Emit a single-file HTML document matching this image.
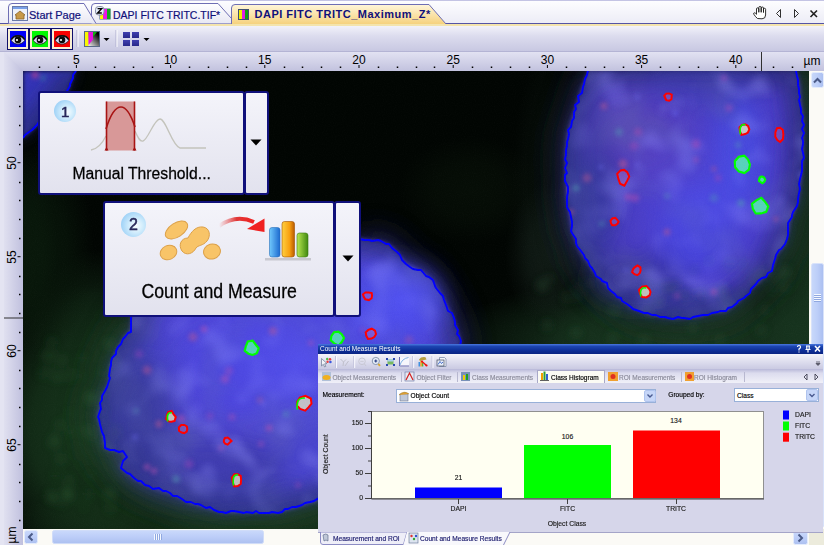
<!DOCTYPE html>
<html><head><meta charset="utf-8">
<style>
*{margin:0;padding:0;box-sizing:border-box}
html,body{width:824px;height:545px;overflow:hidden;background:#e6e6f2;font-family:"Liberation Sans",sans-serif}
div,span,svg{position:absolute}
.t{white-space:nowrap;line-height:1}
#tabstrip{left:0;top:0;width:824px;height:24px;background:linear-gradient(#fdfdff,#ececf6);border-top:1px solid #c4c4e4}
#tabline{left:0;top:23px;width:824px;height:1px;background:#5454a4}
#tabsub{left:0;top:24px;width:824px;height:2px;background:#f4e4ac}
#toolbar{left:0;top:26px;width:824px;height:26px;background:linear-gradient(#f2f2fa,#dcdcee 40%,#c8c8e2);border-bottom:1px solid #b4b4d4}
#rulerT{left:4px;top:52px;width:820px;height:19px;background:linear-gradient(#e2e2f2,#c2c2de);clip-path:polygon(0 0,100% 0,100% 100%,19px 100%)}
#rulerL{left:4px;top:52px;width:19px;height:493px;background:linear-gradient(90deg,#e0e0f0,#c0c0de)}
#frameL{left:0;top:52px;width:4px;height:493px;background:#e4e4f2}
#img{left:23px;top:71px;width:786px;height:458px;background:#020a04;overflow:hidden}
#vscroll{left:809px;top:71px;width:15px;height:474px;background:#fbfaf6}
#hscroll{left:23px;top:529px;width:801px;height:16px;background:#fbfaf6}
.rt{font-size:12px;color:#000;top:53.8px}
.rl{font-size:12px;color:#000;left:7px;transform:rotate(-90deg);transform-origin:0 0}
.co{background:linear-gradient(#f4f4fa,#e2e2ee);border:2px solid #10107a;border-radius:3px}
.cap{font-size:16px;color:#000}
.num{border-radius:50%;background:radial-gradient(circle at 60% 55%,#f8fdff 0,#d0ecfc 35%,#98cef6 80%,#b8c8f4 100%);color:#202050}
#panel{left:318px;top:344px;width:505px;height:189px;background:#d6d6ea;border-bottom:1px solid #a4a4c8}
.ps{font-size:6.5px;color:#000;-webkit-text-stroke:0.15px currentColor}
.cl{font-size:6.8px;color:#202020}
</style></head><body>
<div id="tabstrip"></div>
<div id="tabline"></div>
<div id="tabsub"></div>
<!-- tabs -->
<svg style="left:0;top:0" width="460" height="25" viewBox="0 0 460 25">
  <defs><linearGradient id="tg3" x1="0" y1="0" x2="0" y2="1"><stop offset="0" stop-color="#fff6da"/><stop offset="1" stop-color="#f6d27e"/></linearGradient>
  <linearGradient id="tg1" x1="0" y1="0" x2="0" y2="1"><stop offset="0" stop-color="#ffffff"/><stop offset="1" stop-color="#e8e8f4"/></linearGradient></defs>
  <path d="M91.5,23.5 L91.5,7 Q91.5,3.5 95,3.5 L218,3.5 L236,23.5" fill="url(#tg1)" stroke="#6e6eb4" stroke-width="1"/>
  <path d="M8.5,23.5 L8.5,7 Q8.5,3.5 12,3.5 L84,3.5 L96,23.5" fill="url(#tg1)" stroke="#6e6eb4" stroke-width="1"/>
  <path d="M231.5,24 L231.5,8 Q231.5,4.5 235,4.5 L429,4.5 L446,24" fill="url(#tg3)" stroke="#6e6eb4" stroke-width="1"/>
</svg>
<span class="t" style="left:29px;top:9.5px;font-size:11px;color:#10107a;-webkit-text-stroke:0.2px #10107a">Start Page</span>
<span class="t" style="left:113px;top:9.5px;font-size:10.5px;color:#10107a;-webkit-text-stroke:0.2px #10107a">DAPI FITC TRITC.TIF*</span>
<span class="t" style="left:254.5px;top:9px;font-size:11px;color:#10107a;font-weight:bold;letter-spacing:0.5px">DAPI FITC TRITC_Maximum_Z*</span>
<!-- tab icons -->
<svg style="left:12px;top:6px" width="17" height="16" viewBox="0 0 17 16">
  <rect x="0.5" y="0.5" width="15" height="14" fill="#eef2fa" stroke="#6a7aa8"/>
  <rect x="1" y="1" width="14" height="2" fill="#7aa0e8"/>
  <path d="M3,9 L8,5 L13,9 L12,9 L12,13 L4,13 L4,9 Z" fill="#c89a48" stroke="#8a6428" stroke-width="0.8"/>
</svg>
<svg style="left:94px;top:5px" width="18" height="16" viewBox="0 0 18 16">
  <rect x="5.5" y="3.5" width="11" height="11" fill="#40607a"/>
  <rect x="6" y="4" width="3.2" height="10" fill="#f8f800"/><rect x="9.2" y="4" width="3.8" height="10" fill="#f010e8"/><rect x="13" y="4" width="3.3" height="10" fill="#10a820"/>
  <rect x="1.5" y="1.5" width="8.5" height="8.5" rx="3" fill="#e4ecfa" stroke="#8a90a8" stroke-width="1"/>
  <path d="M3.6,3.6 H7.6 L3.6,8 H7.8" fill="none" stroke="#000" stroke-width="1.4"/>
</svg>
<svg style="left:238px;top:9px" width="11" height="11" viewBox="0 0 11 11">
  <rect x="0" y="0" width="11" height="11" fill="#405070"/><rect x="1" y="1" width="3" height="9" fill="#f0f000"/><rect x="4" y="1" width="3" height="9" fill="#e020e0"/><rect x="7" y="1" width="3" height="9" fill="#10a010"/>
</svg>
<!-- right tab controls -->
<svg style="left:750px;top:4px" width="74" height="18" viewBox="0 0 74 18">
  <path d="M7.5,14.5 Q5.5,13 3.8,10.2 Q3.2,9 4.3,8.8 Q5.2,8.7 6.5,10.3 L6.5,5 Q6.5,3.8 7.7,3.8 Q8.8,3.8 8.8,5 L8.8,8.3 L8.8,3.6 Q8.8,2.5 10,2.5 Q11.2,2.5 11.2,3.6 L11.2,8.3 L11.2,4 Q11.2,3 12.3,3 Q13.5,3 13.5,4 L13.5,8.5 L13.5,5.2 Q13.5,4.3 14.5,4.3 Q15.6,4.3 15.6,5.3 L15.6,11 Q15.6,14.8 12,14.8 Z" fill="#fff" stroke="#1a1a1a" stroke-width="0.9" stroke-linejoin="round"/>
  <path d="M30.5,5.5 L26.5,9.5 L30.5,13.5 Z" fill="none" stroke="#303030" stroke-width="1"/>
  <path d="M44.5,5.5 L48.5,9.5 L44.5,13.5 Z" fill="none" stroke="#303030" stroke-width="1"/>
  <path d="M60.5,6.5 L67,13 M67,6.5 L60.5,13" stroke="#202020" stroke-width="1.6"/>
</svg>
<div id="toolbar"></div>
<!-- toolbar buttons -->
<svg style="left:0;top:26px" width="160" height="26" viewBox="0 26 160 26">
  <defs><linearGradient id="cg" x1="1" y1="0" x2="0" y2="1"><stop offset="0.15" stop-color="#000"/><stop offset="0.9" stop-color="#fff"/></linearGradient>
  <linearGradient id="gq" x1="0" y1="0" x2="0" y2="1"><stop offset="0" stop-color="#4040b0"/><stop offset="1" stop-color="#28288a"/></linearGradient>
  <symbol id="eye" viewBox="0 0 16 16">
    <path d="M1,9 C4,3.2 12,3.2 15,9 C12,14.5 4,14.5 1,9 Z" fill="#d8d8f8" stroke="#202020" stroke-width="0.8"/>
    <path d="M1.3,8.6 C4,3.5 12,3.5 14.7,8.6" fill="none" stroke="#101010" stroke-width="1.7"/>
    <circle cx="8" cy="8.9" r="3.3" fill="#0a0a0a"/><circle cx="7" cy="9" r="1.1" fill="#fff"/>
  </symbol></defs>
  <rect x="7" y="28" width="66" height="22" fill="#10106a"/>
  <rect x="8" y="29" width="20" height="20" fill="#f8f0d4"/><rect x="10" y="31" width="16" height="16" fill="#0000f8"/>
  <rect x="30" y="29" width="20" height="20" fill="#f8f0d4"/><rect x="32" y="31" width="16" height="16" fill="#00f800"/>
  <rect x="52" y="29" width="20" height="20" fill="#f8f0d4"/><rect x="54" y="31" width="16" height="16" fill="#f80000"/>
  <use href="#eye" x="10" y="31" width="16" height="16"/><use href="#eye" x="32" y="31" width="16" height="16"/><use href="#eye" x="54" y="31" width="16" height="16"/>
  <rect x="76.5" y="30" width="1" height="17" fill="#b0b0d0"/><rect x="77.5" y="30" width="1" height="17" fill="#ffffff"/>
  <rect x="84.5" y="31.5" width="15" height="15" fill="url(#cg)" stroke="#5a6a88"/>
  <path d="M85,32 L88.5,32 L88.5,46 L85,46 Z" fill="#f8f800"/><path d="M88.5,32 L93,32 L93,39.5 L88.5,45 Z" fill="#e810e0"/><path d="M93,32 L97,32 L93,37 Z" fill="#10b010"/>
  <path d="M103.5,38 L109.5,38 L106.5,41 Z" fill="#000"/>
  <rect x="115.5" y="30" width="1" height="17" fill="#b0b0d0"/><rect x="116.5" y="30" width="1" height="17" fill="#ffffff"/>
  <g fill="url(#gq)"><rect x="123" y="32" width="7" height="6"/><rect x="132" y="32" width="7" height="6"/><rect x="123" y="40" width="7" height="6"/><rect x="132" y="40" width="7" height="6"/></g>
  <path d="M143.5,38 L149.5,38 L146.5,41 Z" fill="#000"/>
</svg>
<div id="frameL"></div>
<div id="rulerL"></div>
<div id="rulerT"></div>
<!-- ruler ticks -->
<svg style="left:0;top:52px" width="824" height="19" viewBox="0 52 824 19" id="rtick"></svg>
<svg style="left:4px;top:71px" width="19" height="474" viewBox="4 71 19 474" id="ltick"></svg>
<svg style="left:0;top:52px" width="824" height="19" viewBox="0 52 824 19"><rect x="38.75" y="66.5" width="1.5" height="1.5" fill="#000"/><rect x="57.75" y="66.5" width="1.5" height="1.5" fill="#000"/><rect x="75.9" y="65" width="1" height="3" fill="#000"/><rect x="94.75" y="66.5" width="1.5" height="1.5" fill="#000"/><rect x="113.75" y="66.5" width="1.5" height="1.5" fill="#000"/><rect x="132.75" y="66.5" width="1.5" height="1.5" fill="#000"/><rect x="151.75" y="66.5" width="1.5" height="1.5" fill="#000"/><rect x="170.1" y="65" width="1" height="3" fill="#000"/><rect x="188.75" y="66.5" width="1.5" height="1.5" fill="#000"/><rect x="207.75" y="66.5" width="1.5" height="1.5" fill="#000"/><rect x="226.75" y="66.5" width="1.5" height="1.5" fill="#000"/><rect x="245.75" y="66.5" width="1.5" height="1.5" fill="#000"/><rect x="264.3" y="65" width="1" height="3" fill="#000"/><rect x="283.75" y="66.5" width="1.5" height="1.5" fill="#000"/><rect x="301.75" y="66.5" width="1.5" height="1.5" fill="#000"/><rect x="320.75" y="66.5" width="1.5" height="1.5" fill="#000"/><rect x="339.75" y="66.5" width="1.5" height="1.5" fill="#000"/><rect x="358.5" y="65" width="1" height="3" fill="#000"/><rect x="377.75" y="66.5" width="1.5" height="1.5" fill="#000"/><rect x="396.75" y="66.5" width="1.5" height="1.5" fill="#000"/><rect x="415.75" y="66.5" width="1.5" height="1.5" fill="#000"/><rect x="433.75" y="66.5" width="1.5" height="1.5" fill="#000"/><rect x="452.7" y="65" width="1" height="3" fill="#000"/><rect x="471.75" y="66.5" width="1.5" height="1.5" fill="#000"/><rect x="490.75" y="66.5" width="1.5" height="1.5" fill="#000"/><rect x="509.75" y="66.5" width="1.5" height="1.5" fill="#000"/><rect x="528.75" y="66.5" width="1.5" height="1.5" fill="#000"/><rect x="546.9" y="65" width="1" height="3" fill="#000"/><rect x="565.75" y="66.5" width="1.5" height="1.5" fill="#000"/><rect x="584.75" y="66.5" width="1.5" height="1.5" fill="#000"/><rect x="603.75" y="66.5" width="1.5" height="1.5" fill="#000"/><rect x="622.75" y="66.5" width="1.5" height="1.5" fill="#000"/><rect x="641.1" y="65" width="1" height="3" fill="#000"/><rect x="659.75" y="66.5" width="1.5" height="1.5" fill="#000"/><rect x="678.75" y="66.5" width="1.5" height="1.5" fill="#000"/><rect x="697.75" y="66.5" width="1.5" height="1.5" fill="#000"/><rect x="716.75" y="66.5" width="1.5" height="1.5" fill="#000"/><rect x="735.3" y="65" width="1" height="3" fill="#000"/><rect x="754.75" y="66.5" width="1.5" height="1.5" fill="#000"/><rect x="772.75" y="66.5" width="1.5" height="1.5" fill="#000"/><rect x="791.75" y="66.5" width="1.5" height="1.5" fill="#000"/><rect x="761" y="52" width="1" height="19" fill="#303030"/></svg>
<span class="t rt" style="left:46.4px;width:60px;text-align:center">5</span>
<span class="t rt" style="left:140.6px;width:60px;text-align:center">10</span>
<span class="t rt" style="left:234.8px;width:60px;text-align:center">15</span>
<span class="t rt" style="left:329.0px;width:60px;text-align:center">20</span>
<span class="t rt" style="left:423.2px;width:60px;text-align:center">25</span>
<span class="t rt" style="left:517.4px;width:60px;text-align:center">30</span>
<span class="t rt" style="left:611.6px;width:60px;text-align:center">35</span>
<span class="t rt" style="left:705.8px;width:60px;text-align:center">40</span>
<span class="t rt" style="left:803.5px;top:54.5px">µm</span>
<svg style="left:0;top:71px" width="23" height="474" viewBox="0 71 23 474"><rect x="19" y="86.75" width="1.5" height="1.5" fill="#000"/><rect x="19" y="105.75" width="1.5" height="1.5" fill="#000"/><rect x="19" y="124.75" width="1.5" height="1.5" fill="#000"/><rect x="19" y="143.75" width="1.5" height="1.5" fill="#000"/><rect x="17.5" y="162.2" width="3" height="1" fill="#000"/><rect x="19" y="181.75" width="1.5" height="1.5" fill="#000"/><rect x="19" y="199.75" width="1.5" height="1.5" fill="#000"/><rect x="19" y="218.75" width="1.5" height="1.5" fill="#000"/><rect x="19" y="237.75" width="1.5" height="1.5" fill="#000"/><rect x="17.5" y="256.2" width="3" height="1" fill="#000"/><rect x="19" y="275.75" width="1.5" height="1.5" fill="#000"/><rect x="19" y="293.75" width="1.5" height="1.5" fill="#000"/><rect x="19" y="312.75" width="1.5" height="1.5" fill="#000"/><rect x="19" y="331.75" width="1.5" height="1.5" fill="#000"/><rect x="17.5" y="350.2" width="3" height="1" fill="#000"/><rect x="19" y="369.75" width="1.5" height="1.5" fill="#000"/><rect x="19" y="387.75" width="1.5" height="1.5" fill="#000"/><rect x="19" y="406.75" width="1.5" height="1.5" fill="#000"/><rect x="19" y="425.75" width="1.5" height="1.5" fill="#000"/><rect x="17.5" y="444.2" width="3" height="1" fill="#000"/><rect x="19" y="463.75" width="1.5" height="1.5" fill="#000"/><rect x="19" y="481.75" width="1.5" height="1.5" fill="#000"/><rect x="19" y="500.75" width="1.5" height="1.5" fill="#000"/><rect x="19" y="519.75" width="1.5" height="1.5" fill="#000"/><rect x="4" y="317.5" width="19" height="1" fill="#303030"/></svg>
<span class="t rl" style="left:6px;top:192.7px;width:60px;text-align:center">50</span>
<span class="t rl" style="left:6px;top:286.7px;width:60px;text-align:center">55</span>
<span class="t rl" style="left:6px;top:380.7px;width:60px;text-align:center">60</span>
<span class="t rl" style="left:6px;top:474.7px;width:60px;text-align:center">65</span>
<span class="t rl" style="left:6px;top:550px;width:30px;text-align:center">µm</span>
<div id="img"><svg width="786" height="458" viewBox="23 71 786 458" style="display:block">
<defs>
<filter id="b40" x="-50%" y="-50%" width="200%" height="200%"><feGaussianBlur stdDeviation="40"/></filter>
<filter id="b25" x="-50%" y="-50%" width="200%" height="200%"><feGaussianBlur stdDeviation="25"/></filter>
<filter id="b12" x="-50%" y="-50%" width="200%" height="200%"><feGaussianBlur stdDeviation="12"/></filter>
<filter id="b10" x="-50%" y="-50%" width="200%" height="200%"><feGaussianBlur stdDeviation="10"/></filter>
<filter id="b6" x="-50%" y="-50%" width="200%" height="200%"><feGaussianBlur stdDeviation="6"/></filter>
<filter id="b4" x="-50%" y="-50%" width="200%" height="200%"><feGaussianBlur stdDeviation="4"/></filter>
<filter id="b2" x="-50%" y="-50%" width="200%" height="200%"><feGaussianBlur stdDeviation="2"/></filter>
<filter id="turb" x="23" y="71" width="786" height="458" filterUnits="userSpaceOnUse">
<feTurbulence type="fractalNoise" baseFrequency="0.035" numOctaves="2" seed="5" result="n"/>
<feColorMatrix type="matrix" values="0.9 0 0 0 -0.35  0 0.6 0 0 -0.25  0 0 1.1 0 -0.45  0 0 0 0 0.45"/>
</filter>
<filter id="turb3" x="23" y="71" width="786" height="458" filterUnits="userSpaceOnUse">
<feTurbulence type="fractalNoise" baseFrequency="0.03" numOctaves="2" seed="21" result="n"/>
<feColorMatrix type="matrix" values="0 0 0 0 0.30  0 0 0 0 0.30  0 0 0 0 0.98  3 0 0 0 -1.5"/><feGaussianBlur stdDeviation="2.5"/>
</filter>
<filter id="turb2" x="23" y="71" width="786" height="458" filterUnits="userSpaceOnUse">
<feTurbulence type="fractalNoise" baseFrequency="0.02" numOctaves="2" seed="9" result="n"/>
<feColorMatrix type="matrix" values="0 0 0 0 0.12  0 0 0 0 0.14  0 0 0 0 0.4  -3 0 0 0 1.6"/><feGaussianBlur stdDeviation="2.5"/>
</filter>
<clipPath id="cR"><polygon id="pR" points="589.0,71.0 582.0,88.0 574.0,113.0 567.6,134.0 565.5,155.0 566.7,197.0 571.8,230.0 580.0,251.0 597.0,276.0 620.0,298.8 633.8,309.0 652.0,315.0 672.8,318.3 698.0,317.0 711.7,312.6 725.5,311.4 739.3,301.0 755.3,285.0 771.4,270.0 776.0,255.2 785.0,243.8 788.6,230.0 789.3,222.2 797.5,202.5 800.8,179.4 803.0,153.0 803.0,120.3 800.8,104.0 799.2,84.0 796.0,71.0"/></clipPath>
<filter id="dither" x="23" y="71" width="786" height="458" filterUnits="userSpaceOnUse">
<feTurbulence type="fractalNoise" baseFrequency="0.9" numOctaves="1" seed="3"/>
<feColorMatrix type="matrix" values="0 0 0 0 1  0 0 0 0 1  0 0 0 0 1  0.05 0 0 0 -0.025"/>
</filter>
<filter id="dither2" x="23" y="71" width="786" height="458" filterUnits="userSpaceOnUse">
<feTurbulence type="fractalNoise" baseFrequency="0.9" numOctaves="1" seed="3"/>
<feColorMatrix type="matrix" values="0 0 0 0 0  0 0 0 0 0  0 0 0 0 0  -0.05 0 0 0 0.025"/>
</filter>
<radialGradient id="dk"><stop offset="0" stop-color="#303a90" stop-opacity="0.5"/><stop offset="0.6" stop-color="#303a90" stop-opacity="0.3"/><stop offset="1" stop-color="#303a90" stop-opacity="0"/></radialGradient>
<radialGradient id="br"><stop offset="0" stop-color="#5858f8" stop-opacity="0.6"/><stop offset="0.6" stop-color="#5050f0" stop-opacity="0.3"/><stop offset="1" stop-color="#5050f0" stop-opacity="0"/></radialGradient>
<clipPath id="cTL"><polygon points="74.5,71.0 68.0,90.0 55.0,105.0 38.5,124.0 23.0,138.0 23.0,71.0"/></clipPath>
<clipPath id="cC"><polygon points="132.5,316.0 131.0,330.5 125.0,336.5 115.0,354.0 110.5,366.0 109.0,383.5 103.0,395.0 98.0,416.0 103.0,436.5 104.7,447.0 110.0,449.3 122.0,452.0 126.0,457.4 120.7,466.7 126.0,472.0 136.7,480.0 158.0,489.4 174.0,494.7 190.0,502.7 222.0,512.0 277.0,512.0 297.0,506.8 318.0,500.0 360.0,470.0 420.0,420.0 455.0,370.0 460.0,341.0 453.0,318.0 442.0,297.0 431.6,280.7 421.0,271.4 405.0,263.4 397.0,252.7 389.0,244.7 381.0,242.0 361.0,239.3 300.0,232.0 200.0,250.0 150.0,290.0"/></clipPath>
</defs>
<rect x="23" y="71" width="786" height="458" fill="#020603"/>
<defs><radialGradient id="gh0"><stop offset="0" stop-color="#1c4022" stop-opacity="0.85"/><stop offset="0.5" stop-color="#1c4022" stop-opacity="0.6375"/><stop offset="1" stop-color="#1c4022" stop-opacity="0"/></radialGradient><radialGradient id="gh1"><stop offset="0" stop-color="#15301a" stop-opacity="0.7"/><stop offset="0.5" stop-color="#15301a" stop-opacity="0.5249999999999999"/><stop offset="1" stop-color="#15301a" stop-opacity="0"/></radialGradient><radialGradient id="gh2"><stop offset="0" stop-color="#0c1e0e" stop-opacity="0.6"/><stop offset="0.5" stop-color="#0c1e0e" stop-opacity="0.44999999999999996"/><stop offset="1" stop-color="#0c1e0e" stop-opacity="0"/></radialGradient><radialGradient id="gh3"><stop offset="0" stop-color="#1a3a1e" stop-opacity="0.8"/><stop offset="0.5" stop-color="#1a3a1e" stop-opacity="0.6000000000000001"/><stop offset="1" stop-color="#1a3a1e" stop-opacity="0"/></radialGradient><radialGradient id="gh4"><stop offset="0" stop-color="#0a1a0c" stop-opacity="0.8"/><stop offset="0.5" stop-color="#0a1a0c" stop-opacity="0.6000000000000001"/><stop offset="1" stop-color="#0a1a0c" stop-opacity="0"/></radialGradient><radialGradient id="gh5"><stop offset="0" stop-color="#102616" stop-opacity="0.5"/><stop offset="0.5" stop-color="#102616" stop-opacity="0.375"/><stop offset="1" stop-color="#102616" stop-opacity="0"/></radialGradient><radialGradient id="gh6"><stop offset="0" stop-color="#1c3c24" stop-opacity="0.9"/><stop offset="0.5" stop-color="#1c3c24" stop-opacity="0.675"/><stop offset="1" stop-color="#1c3c24" stop-opacity="0"/></radialGradient><radialGradient id="gh7"><stop offset="0" stop-color="#183620" stop-opacity="0.9"/><stop offset="0.5" stop-color="#183620" stop-opacity="0.675"/><stop offset="1" stop-color="#183620" stop-opacity="0"/></radialGradient><radialGradient id="gh8"><stop offset="0" stop-color="#0a140a" stop-opacity="0.6"/><stop offset="0.5" stop-color="#0a140a" stop-opacity="0.44999999999999996"/><stop offset="1" stop-color="#0a140a" stop-opacity="0"/></radialGradient><radialGradient id="gh9"><stop offset="0" stop-color="#0e1812" stop-opacity="0.5"/><stop offset="0.5" stop-color="#0e1812" stop-opacity="0.375"/><stop offset="1" stop-color="#0e1812" stop-opacity="0"/></radialGradient><radialGradient id="gh10"><stop offset="0" stop-color="#16221c" stop-opacity="0.7"/><stop offset="0.5" stop-color="#16221c" stop-opacity="0.5249999999999999"/><stop offset="1" stop-color="#16221c" stop-opacity="0"/></radialGradient><radialGradient id="gh11"><stop offset="0" stop-color="#1a3820" stop-opacity="0.8"/><stop offset="0.5" stop-color="#1a3820" stop-opacity="0.6000000000000001"/><stop offset="1" stop-color="#1a3820" stop-opacity="0"/></radialGradient><radialGradient id="gh12"><stop offset="0" stop-color="#183220" stop-opacity="0.8"/><stop offset="0.5" stop-color="#183220" stop-opacity="0.6000000000000001"/><stop offset="1" stop-color="#183220" stop-opacity="0"/></radialGradient></defs><ellipse cx="80" cy="430" rx="99" ry="144" fill="url(#gh0)"/><ellipse cx="95" cy="340" rx="63" ry="90" fill="url(#gh1)"/><ellipse cx="30" cy="260" rx="27" ry="108" fill="url(#gh2)"/><ellipse cx="220" cy="525" rx="216" ry="45" fill="url(#gh3)"/><ellipse cx="40" cy="250" rx="54" ry="108" fill="url(#gh4)"/><ellipse cx="600" cy="335" rx="63" ry="45" fill="url(#gh5)"/><ellipse cx="690" cy="345" rx="252" ry="72" fill="url(#gh6)"/><ellipse cx="810" cy="290" rx="54" ry="198" fill="url(#gh7)"/><ellipse cx="470" cy="190" rx="72" ry="54" fill="url(#gh8)"/><ellipse cx="548" cy="190" rx="36" ry="144" fill="url(#gh9)"/><ellipse cx="550" cy="255" rx="45" ry="72" fill="url(#gh10)"/><ellipse cx="440" cy="510" rx="198" ry="72" fill="url(#gh11)"/><ellipse cx="810" cy="90" rx="27" ry="72" fill="url(#gh12)"/>
<g filter="url(#b12)" opacity="0.8">
<polyline points="132.5,316.0 131.0,330.5 125.0,336.5 115.0,354.0 110.5,366.0 109.0,383.5 103.0,395.0 98.0,416.0 103.0,436.5 104.7,447.0 110.0,449.3 122.0,452.0 126.0,457.4 120.7,466.7 126.0,472.0 136.7,480.0 158.0,489.4 174.0,494.7 190.0,502.7 222.0,512.0 277.0,512.0 297.0,506.8 318.0,500.0 360.0,470.0" fill="none" stroke="#22422c" stroke-width="34"/>
<polyline points="360.0,470.0 420.0,420.0 455.0,370.0 460.0,341.0 453.0,318.0 442.0,297.0 431.6,280.7 421.0,271.4 405.0,263.4 397.0,252.7 389.0,244.7 381.0,242.0 361.0,239.3" fill="none" stroke="#1a1c4a" stroke-width="24"/>
<polyline points="580.0,251.0 597.0,276.0 620.0,298.8 633.8,309.0 652.0,315.0 672.8,318.3 698.0,317.0 711.7,312.6 725.5,311.4 739.3,301.0 755.3,285.0 771.4,270.0 776.0,255.2 785.0,243.8 788.6,230.0 789.3,222.2 797.5,202.5 800.8,179.4 803.0,153.0 803.0,120.3 800.8,104.0 799.2,84.0 796.0,71.0" fill="none" stroke="#1c3628" stroke-width="30"/>
<polyline points="589.0,71.0 582.0,88.0 574.0,113.0 567.6,134.0 565.5,155.0 566.7,197.0 571.8,230.0 580.0,251.0 597.0,276.0" fill="none" stroke="#1c2040" stroke-width="24"/>
</g>
<g filter="url(#b6)" opacity="0.28">
<polygon points="74.5,71.0 68.0,90.0 55.0,105.0 38.5,124.0 23.0,138.0 23.0,71.0" fill="#30309a" stroke="#30309a" stroke-width="6"/>
<polygon points="132.5,316.0 131.0,330.5 125.0,336.5 115.0,354.0 110.5,366.0 109.0,383.5 103.0,395.0 98.0,416.0 103.0,436.5 104.7,447.0 110.0,449.3 122.0,452.0 126.0,457.4 120.7,466.7 126.0,472.0 136.7,480.0 158.0,489.4 174.0,494.7 190.0,502.7 222.0,512.0 277.0,512.0 297.0,506.8 318.0,500.0 360.0,470.0 420.0,420.0 455.0,370.0 460.0,341.0 453.0,318.0 442.0,297.0 431.6,280.7 421.0,271.4 405.0,263.4 397.0,252.7 389.0,244.7 381.0,242.0 361.0,239.3 300.0,232.0 200.0,250.0 150.0,290.0" fill="#4040b0" stroke="#4040b0" stroke-width="6"/>
<polygon points="589.0,71.0 582.0,88.0 574.0,113.0 567.6,134.0 565.5,155.0 566.7,197.0 571.8,230.0 580.0,251.0 597.0,276.0 620.0,298.8 633.8,309.0 652.0,315.0 672.8,318.3 698.0,317.0 711.7,312.6 725.5,311.4 739.3,301.0 755.3,285.0 771.4,270.0 776.0,255.2 785.0,243.8 788.6,230.0 789.3,222.2 797.5,202.5 800.8,179.4 803.0,153.0 803.0,120.3 800.8,104.0 799.2,84.0 796.0,71.0" fill="#3a3aa8" stroke="#3a3aa8" stroke-width="6"/>
</g>
<g filter="url(#b2)">
<polygon points="74.5,71.0 68.0,90.0 55.0,105.0 38.5,124.0 23.0,138.0 23.0,71.0" fill="#3636b8"/>
<polygon points="132.5,316.0 131.0,330.5 125.0,336.5 115.0,354.0 110.5,366.0 109.0,383.5 103.0,395.0 98.0,416.0 103.0,436.5 104.7,447.0 110.0,449.3 122.0,452.0 126.0,457.4 120.7,466.7 126.0,472.0 136.7,480.0 158.0,489.4 174.0,494.7 190.0,502.7 222.0,512.0 277.0,512.0 297.0,506.8 318.0,500.0 360.0,470.0 420.0,420.0 455.0,370.0 460.0,341.0 453.0,318.0 442.0,297.0 431.6,280.7 421.0,271.4 405.0,263.4 397.0,252.7 389.0,244.7 381.0,242.0 361.0,239.3 300.0,232.0 200.0,250.0 150.0,290.0" fill="#5046d4"/>
<polygon points="589.0,71.0 582.0,88.0 574.0,113.0 567.6,134.0 565.5,155.0 566.7,197.0 571.8,230.0 580.0,251.0 597.0,276.0 620.0,298.8 633.8,309.0 652.0,315.0 672.8,318.3 698.0,317.0 711.7,312.6 725.5,311.4 739.3,301.0 755.3,285.0 771.4,270.0 776.0,255.2 785.0,243.8 788.6,230.0 789.3,222.2 797.5,202.5 800.8,179.4 803.0,153.0 803.0,120.3 800.8,104.0 799.2,84.0 796.0,71.0" fill="#4c3ec4"/>
</g>
<g clip-path="url(#cC)"><g filter="url(#b10)" opacity="0.7"><polygon points="132.5,316.0 131.0,330.5 125.0,336.5 115.0,354.0 110.5,366.0 109.0,383.5 103.0,395.0 98.0,416.0 103.0,436.5 104.7,447.0 110.0,449.3 122.0,452.0 126.0,457.4 120.7,466.7 126.0,472.0 136.7,480.0 158.0,489.4 174.0,494.7 190.0,502.7 222.0,512.0 277.0,512.0 297.0,506.8 318.0,500.0 360.0,470.0 420.0,420.0 455.0,370.0 460.0,341.0 453.0,318.0 442.0,297.0 431.6,280.7 421.0,271.4 405.0,263.4 397.0,252.7 389.0,244.7 381.0,242.0 361.0,239.3 300.0,232.0 200.0,250.0 150.0,290.0" fill="none" stroke="#262a6a" stroke-width="30"/></g></g>
<g clip-path="url(#cTL)"><g filter="url(#b10)" opacity="0.6"><polyline points="74.5,71.0 68.0,90.0 55.0,105.0 38.5,124.0 23.0,138.0" fill="none" stroke="#20285a" stroke-width="30"/></g></g>
<g filter="url(#b2)"><circle cx="35" cy="75" r="3.5" fill="#b04090" opacity="0.7"/><circle cx="43" cy="78" r="3" fill="#3a80a0" opacity="0.5"/></g>
<g clip-path="url(#cR)"><g filter="url(#b10)" opacity="0.7"><polygon points="589.0,71.0 582.0,88.0 574.0,113.0 567.6,134.0 565.5,155.0 566.7,197.0 571.8,230.0 580.0,251.0 597.0,276.0 620.0,298.8 633.8,309.0 652.0,315.0 672.8,318.3 698.0,317.0 711.7,312.6 725.5,311.4 739.3,301.0 755.3,285.0 771.4,270.0 776.0,255.2 785.0,243.8 788.6,230.0 789.3,222.2 797.5,202.5 800.8,179.4 803.0,153.0 803.0,120.3 800.8,104.0 799.2,84.0 796.0,71.0" fill="none" stroke="#262a6a" stroke-width="30"/></g></g>
<g filter="url(#b12)"><ellipse cx="395" cy="300" rx="45" ry="35" fill="#4a4ae8" opacity="0.9"/><ellipse cx="240" cy="370" rx="60" ry="40" fill="#4c42d8" opacity="0.7"/><ellipse cx="210" cy="470" rx="80" ry="35" fill="#363698" opacity="0.6"/><ellipse cx="140" cy="420" rx="30" ry="60" fill="#3a3a90" opacity="0.6"/><ellipse cx="330" cy="450" rx="50" ry="40" fill="#4646c8" opacity="0.5"/><ellipse cx="700" cy="230" rx="40" ry="45" fill="#4646e0" opacity="0.7"/><ellipse cx="740" cy="150" rx="25" ry="60" fill="#4650e8" opacity="0.7"/><ellipse cx="640" cy="140" rx="60" ry="50" fill="#5a40b8" opacity="0.6"/><ellipse cx="640" cy="280" rx="50" ry="25" fill="#30308a" opacity="0.7"/><ellipse cx="600" cy="200" rx="25" ry="50" fill="#38389c" opacity="0.6"/><ellipse cx="700" cy="90" rx="60" ry="25" fill="#4040b8" opacity="0.5"/></g>
<g clip-path="url(#cC)"><rect x="23" y="71" width="786" height="458" filter="url(#turb2)" opacity="0.35"/></g>
<g clip-path="url(#cR)"><rect x="23" y="71" width="786" height="458" filter="url(#turb2)" opacity="0.35"/></g>
<g clip-path="url(#cC)"><rect x="23" y="71" width="786" height="458" filter="url(#turb3)" opacity="0.45"/></g>
<g clip-path="url(#cR)"><rect x="23" y="71" width="786" height="458" filter="url(#turb3)" opacity="0.4"/></g>
<g clip-path="url(#cC)"><ellipse cx="110" cy="410" rx="90" ry="130" fill="url(#dk)"/><ellipse cx="250" cy="520" rx="150" ry="50" fill="url(#dk)"/></g>
<g clip-path="url(#cR)"><ellipse cx="575" cy="190" rx="50" ry="140" fill="url(#dk)"/><ellipse cx="680" cy="320" rx="120" ry="40" fill="url(#dk)"/></g>
<g clip-path="url(#cC)"><ellipse cx="300" cy="360" rx="150" ry="80" fill="url(#br)"/><ellipse cx="400" cy="300" rx="60" ry="50" fill="url(#br)"/></g>
<g clip-path="url(#cR)"><ellipse cx="700" cy="200" rx="90" ry="100" fill="url(#br)" opacity="0.6"/></g>
<g clip-path="url(#cC)"><g filter="url(#b2)"><circle cx="159" cy="424" r="3.4" fill="#c05890" opacity="0.51"/><circle cx="336" cy="492" r="3.8" fill="#c05890" opacity="0.50"/><circle cx="358" cy="434" r="3.6" fill="#c050b0" opacity="0.52"/><circle cx="193" cy="337" r="4.4" fill="#c05890" opacity="0.46"/><circle cx="229" cy="371" r="4.2" fill="#c050b0" opacity="0.32"/><circle cx="435" cy="423" r="2.6" fill="#6a6af0" opacity="0.42"/><circle cx="135" cy="437" r="3.0" fill="#6a6af0" opacity="0.37"/><circle cx="330" cy="401" r="3.3" fill="#50a0b0" opacity="0.44"/><circle cx="325" cy="387" r="3.1" fill="#50a0b0" opacity="0.36"/><circle cx="269" cy="428" r="3.3" fill="#c050b0" opacity="0.51"/><circle cx="154" cy="471" r="2.9" fill="#c050b0" opacity="0.53"/><circle cx="379" cy="422" r="3.3" fill="#c05890" opacity="0.44"/><circle cx="324" cy="486" r="2.7" fill="#50a0b0" opacity="0.38"/><circle cx="424" cy="378" r="2.8" fill="#c050b0" opacity="0.48"/><circle cx="396" cy="405" r="2.9" fill="#c05890" opacity="0.44"/><circle cx="210" cy="416" r="3.3" fill="#a048b8" opacity="0.40"/><circle cx="147" cy="467" r="3.0" fill="#c050b0" opacity="0.54"/><circle cx="311" cy="343" r="2.9" fill="#c050b0" opacity="0.40"/><circle cx="363" cy="330" r="2.6" fill="#c050b0" opacity="0.34"/><circle cx="264" cy="404" r="3.2" fill="#6a6af0" opacity="0.37"/><circle cx="326" cy="415" r="3.8" fill="#6a6af0" opacity="0.30"/><circle cx="189" cy="464" r="4.4" fill="#a048b8" opacity="0.42"/><circle cx="139" cy="354" r="3.8" fill="#a048b8" opacity="0.38"/><circle cx="298" cy="485" r="2.8" fill="#a048b8" opacity="0.46"/><circle cx="147" cy="370" r="4.3" fill="#c05890" opacity="0.45"/><circle cx="232" cy="417" r="3.5" fill="#c050b0" opacity="0.36"/><circle cx="273" cy="331" r="4.1" fill="#c05890" opacity="0.45"/><circle cx="261" cy="444" r="2.8" fill="#c050b0" opacity="0.42"/><circle cx="204" cy="329" r="3.1" fill="#c050b0" opacity="0.53"/><circle cx="286" cy="414" r="3.3" fill="#50a0b0" opacity="0.36"/><circle cx="366" cy="417" r="3.6" fill="#6a6af0" opacity="0.33"/><circle cx="176" cy="479" r="3.8" fill="#50a0b0" opacity="0.47"/><circle cx="225" cy="379" r="4.3" fill="#c050b0" opacity="0.42"/><circle cx="221" cy="448" r="2.5" fill="#c050b0" opacity="0.46"/><circle cx="136" cy="411" r="2.8" fill="#50a0b0" opacity="0.32"/><circle cx="181" cy="419" r="4.3" fill="#c050b0" opacity="0.48"/><circle cx="236" cy="306" r="3.2" fill="#50a0b0" opacity="0.47"/><circle cx="409" cy="340" r="4.4" fill="#c05890" opacity="0.31"/><circle cx="260" cy="400" r="3.3" fill="#c05890" opacity="0.30"/><circle cx="326" cy="415" r="4.5" fill="#c050b0" opacity="0.52"/></g></g>
<g clip-path="url(#cR)"><g filter="url(#b2)"><circle cx="675" cy="113" r="3.4" fill="#6a6af0" opacity="0.42"/><circle cx="601" cy="167" r="2.6" fill="#6a6af0" opacity="0.45"/><circle cx="628" cy="197" r="3.5" fill="#c050b0" opacity="0.45"/><circle cx="738" cy="160" r="3.2" fill="#c050b0" opacity="0.34"/><circle cx="619" cy="132" r="3.8" fill="#50a0b0" opacity="0.41"/><circle cx="738" cy="145" r="2.9" fill="#50a0b0" opacity="0.41"/><circle cx="724" cy="78" r="3.3" fill="#a048b8" opacity="0.45"/><circle cx="667" cy="232" r="3.2" fill="#c05890" opacity="0.52"/><circle cx="714" cy="198" r="4.1" fill="#50a0b0" opacity="0.33"/><circle cx="571" cy="212" r="3.3" fill="#c05890" opacity="0.43"/><circle cx="637" cy="97" r="3.4" fill="#6a6af0" opacity="0.32"/><circle cx="795" cy="213" r="3.9" fill="#c050b0" opacity="0.37"/><circle cx="626" cy="270" r="2.5" fill="#6a6af0" opacity="0.33"/><circle cx="667" cy="196" r="3.0" fill="#50a0b0" opacity="0.34"/><circle cx="776" cy="219" r="2.7" fill="#c05890" opacity="0.43"/><circle cx="638" cy="132" r="3.9" fill="#c050b0" opacity="0.35"/><circle cx="635" cy="198" r="4.0" fill="#c050b0" opacity="0.43"/><circle cx="741" cy="203" r="3.6" fill="#50a0b0" opacity="0.54"/><circle cx="565" cy="190" r="3.3" fill="#a048b8" opacity="0.50"/><circle cx="714" cy="169" r="2.8" fill="#c05890" opacity="0.41"/><circle cx="604" cy="106" r="3.6" fill="#c05890" opacity="0.46"/><circle cx="576" cy="188" r="3.4" fill="#50a0b0" opacity="0.46"/><circle cx="714" cy="292" r="2.9" fill="#c050b0" opacity="0.52"/><circle cx="803" cy="175" r="4.5" fill="#6a6af0" opacity="0.53"/><circle cx="677" cy="296" r="3.2" fill="#c050b0" opacity="0.32"/><circle cx="602" cy="224" r="3.5" fill="#50a0b0" opacity="0.31"/><circle cx="696" cy="160" r="2.8" fill="#c050b0" opacity="0.38"/><circle cx="696" cy="144" r="4.5" fill="#a048b8" opacity="0.53"/><circle cx="587" cy="178" r="4.4" fill="#c05890" opacity="0.42"/><circle cx="718" cy="178" r="3.4" fill="#a048b8" opacity="0.44"/><circle cx="729" cy="108" r="3.5" fill="#a048b8" opacity="0.51"/><circle cx="623" cy="164" r="4.4" fill="#c05890" opacity="0.52"/><circle cx="634" cy="146" r="4.4" fill="#a048b8" opacity="0.43"/><circle cx="637" cy="165" r="2.7" fill="#6a6af0" opacity="0.30"/></g></g>
<g filter="url(#b4)"><circle cx="70" cy="432" r="2.1" fill="#3a7040" opacity="0.48"/><circle cx="84" cy="508" r="2.4" fill="#3a7040" opacity="0.23"/><circle cx="53" cy="498" r="3.4" fill="#3a7040" opacity="0.48"/><circle cx="104" cy="409" r="2.7" fill="#3a7040" opacity="0.35"/><circle cx="67" cy="493" r="4.8" fill="#3a7040" opacity="0.48"/><circle cx="82" cy="358" r="3.3" fill="#3a7040" opacity="0.21"/><circle cx="61" cy="459" r="4.9" fill="#3a7040" opacity="0.21"/><circle cx="52" cy="342" r="2.9" fill="#3a7040" opacity="0.42"/><circle cx="60" cy="425" r="3.5" fill="#3a7040" opacity="0.37"/><circle cx="108" cy="446" r="4.2" fill="#3a7040" opacity="0.41"/><circle cx="110" cy="344" r="3.9" fill="#3a7040" opacity="0.45"/><circle cx="89" cy="431" r="4.6" fill="#3a7040" opacity="0.36"/><circle cx="57" cy="377" r="3.6" fill="#3a7040" opacity="0.38"/><circle cx="51" cy="496" r="3.9" fill="#3a7040" opacity="0.30"/><circle cx="54" cy="443" r="4.7" fill="#3a7040" opacity="0.26"/><circle cx="102" cy="373" r="2.3" fill="#3a7040" opacity="0.47"/><circle cx="51" cy="355" r="3.2" fill="#3a7040" opacity="0.33"/><circle cx="115" cy="432" r="4.1" fill="#3a7040" opacity="0.26"/><circle cx="90" cy="476" r="2.3" fill="#3a7040" opacity="0.37"/><circle cx="69" cy="480" r="3.1" fill="#3a7040" opacity="0.41"/><circle cx="91" cy="398" r="5.0" fill="#3a7040" opacity="0.45"/><circle cx="104" cy="422" r="2.1" fill="#3a7040" opacity="0.43"/><circle cx="89" cy="494" r="3.4" fill="#3a7040" opacity="0.26"/><circle cx="49" cy="369" r="2.5" fill="#3a7040" opacity="0.28"/><circle cx="94" cy="439" r="2.4" fill="#3a7040" opacity="0.40"/><circle cx="46" cy="356" r="3.2" fill="#3a7040" opacity="0.33"/><circle cx="68" cy="376" r="3.1" fill="#3a7040" opacity="0.39"/><circle cx="43" cy="374" r="3.2" fill="#3a7040" opacity="0.31"/><circle cx="70" cy="497" r="3.8" fill="#3a7040" opacity="0.23"/><circle cx="103" cy="395" r="2.3" fill="#3a7040" opacity="0.45"/><circle cx="110" cy="494" r="4.8" fill="#3a7040" opacity="0.37"/><circle cx="55" cy="439" r="3.0" fill="#3a7040" opacity="0.43"/><circle cx="62" cy="360" r="4.2" fill="#3a7040" opacity="0.25"/><circle cx="115" cy="363" r="3.0" fill="#3a7040" opacity="0.36"/><circle cx="70" cy="413" r="2.5" fill="#3a7040" opacity="0.26"/><circle cx="55" cy="476" r="2.9" fill="#3a7040" opacity="0.23"/><circle cx="111" cy="508" r="4.7" fill="#3a7040" opacity="0.21"/><circle cx="62" cy="503" r="2.9" fill="#3a7040" opacity="0.26"/><circle cx="72" cy="371" r="2.2" fill="#3a7040" opacity="0.35"/><circle cx="80" cy="376" r="2.4" fill="#3a7040" opacity="0.32"/><circle cx="695" cy="270" r="2.3" fill="#3a6a44" opacity="0.26"/><circle cx="659" cy="302" r="4.3" fill="#3a6a44" opacity="0.36"/><circle cx="543" cy="282" r="2.8" fill="#3a6a44" opacity="0.29"/><circle cx="685" cy="295" r="3.6" fill="#3a6a44" opacity="0.41"/><circle cx="567" cy="297" r="3.9" fill="#3a6a44" opacity="0.34"/><circle cx="720" cy="340" r="3.2" fill="#3a6a44" opacity="0.43"/><circle cx="644" cy="341" r="4.6" fill="#3a6a44" opacity="0.34"/><circle cx="700" cy="296" r="3.5" fill="#3a6a44" opacity="0.27"/><circle cx="647" cy="286" r="3.6" fill="#3a6a44" opacity="0.32"/><circle cx="613" cy="338" r="4.0" fill="#3a6a44" opacity="0.39"/><circle cx="547" cy="325" r="3.8" fill="#3a6a44" opacity="0.36"/><circle cx="650" cy="317" r="2.2" fill="#3a6a44" opacity="0.28"/><circle cx="647" cy="309" r="4.2" fill="#3a6a44" opacity="0.28"/><circle cx="755" cy="279" r="4.2" fill="#3a6a44" opacity="0.26"/><circle cx="743" cy="264" r="2.3" fill="#3a6a44" opacity="0.40"/><circle cx="785" cy="272" r="4.9" fill="#3a6a44" opacity="0.26"/><circle cx="730" cy="264" r="3.3" fill="#3a6a44" opacity="0.23"/><circle cx="772" cy="290" r="2.5" fill="#3a6a44" opacity="0.29"/><circle cx="578" cy="295" r="3.8" fill="#3a6a44" opacity="0.36"/><circle cx="723" cy="291" r="4.2" fill="#3a6a44" opacity="0.40"/><circle cx="577" cy="284" r="2.4" fill="#3a6a44" opacity="0.32"/><circle cx="675" cy="286" r="3.5" fill="#3a6a44" opacity="0.41"/><circle cx="614" cy="311" r="4.2" fill="#3a6a44" opacity="0.37"/><circle cx="591" cy="283" r="2.7" fill="#3a6a44" opacity="0.44"/><circle cx="675" cy="315" r="2.6" fill="#3a6a44" opacity="0.37"/><circle cx="709" cy="261" r="2.8" fill="#3a6a44" opacity="0.21"/><circle cx="550" cy="279" r="2.8" fill="#3a6a44" opacity="0.39"/><circle cx="786" cy="274" r="2.7" fill="#3a6a44" opacity="0.45"/><circle cx="670" cy="290" r="3.0" fill="#3a6a44" opacity="0.32"/><circle cx="576" cy="333" r="4.4" fill="#3a6a44" opacity="0.31"/><circle cx="761" cy="330" r="4.3" fill="#3a6a44" opacity="0.31"/><circle cx="741" cy="293" r="2.5" fill="#3a6a44" opacity="0.24"/><circle cx="765" cy="310" r="2.9" fill="#3a6a44" opacity="0.39"/><circle cx="762" cy="275" r="4.0" fill="#3a6a44" opacity="0.35"/><circle cx="664" cy="287" r="3.6" fill="#3a6a44" opacity="0.31"/><circle cx="693" cy="328" r="3.4" fill="#3a6a44" opacity="0.41"/><circle cx="542" cy="286" r="4.7" fill="#3a6a44" opacity="0.35"/><circle cx="727" cy="302" r="4.3" fill="#3a6a44" opacity="0.28"/><circle cx="777" cy="278" r="4.0" fill="#3a6a44" opacity="0.28"/><circle cx="784" cy="287" r="3.3" fill="#3a6a44" opacity="0.35"/></g>
<polyline points="76.0,71.0 73.0,75.0 73.0,78.0 70.0,84.0 70.0,86.0 67.0,91.0 64.0,94.0 62.0,98.0 59.0,101.0 55.0,104.0 52.0,107.0 48.0,111.0 48.0,115.0 43.0,117.0 40.0,120.0 37.0,125.0 35.0,127.0 32.0,130.0 29.0,132.0 25.0,135.0 23.0,138.0" fill="none" stroke="#0000ff" stroke-width="1.9" stroke-linejoin="round"/>
<polyline points="131.0,316.0 131.0,322.0 131.0,326.0 131.0,332.0 128.0,333.0 125.0,337.0 123.0,339.0 121.0,344.0 118.0,347.0 116.0,351.0 116.0,354.0 112.0,358.0 111.0,362.0 111.0,365.0 110.0,369.0 109.0,376.0 110.0,378.0 108.0,384.0 107.0,387.0 105.0,391.0 102.0,396.0 102.0,400.0 100.0,403.0 101.0,409.0 100.0,411.0 98.0,417.0 99.0,419.0 100.0,424.0 101.0,428.0 102.0,432.0 104.0,436.0 105.0,443.0 105.0,448.0 110.0,450.0 114.0,450.0 119.0,452.0 123.0,451.0 127.0,457.0 123.0,461.0 121.0,468.0 127.0,473.0 130.0,474.0 134.0,478.0 138.0,481.0 141.0,481.0 145.0,485.0 149.0,486.0 153.0,489.0 159.0,488.0 163.0,491.0 166.0,491.0 170.0,493.0 173.0,496.0 177.0,496.0 182.0,499.0 186.0,502.0 191.0,502.0 195.0,504.0 198.0,504.0 201.0,505.0 206.0,508.0 210.0,507.0 214.0,510.0 219.0,512.0 222.0,512.0 226.0,513.0 231.0,511.0 234.0,511.0 239.0,512.0 244.0,513.0 246.0,512.0 253.0,513.0 256.0,511.0 259.0,513.0 265.0,513.0 269.0,513.0 272.0,512.0 278.0,513.0 282.0,512.0 285.0,509.0 288.0,509.0 292.0,507.0 296.0,507.0 302.0,505.0 305.0,503.0 310.0,502.0 314.0,501.0 317.0,499.0 321.0,498.0 324.0,494.0 330.0,492.0 333.0,490.0 336.0,489.0 338.0,484.0 342.0,483.0 346.0,481.0 350.0,478.0 353.0,475.0 357.0,472.0 361.0,470.0 363.0,467.0 366.0,465.0 370.0,461.0 372.0,459.0 375.0,457.0 378.0,454.0 382.0,451.0 386.0,449.0 389.0,446.0 393.0,445.0 395.0,442.0 398.0,437.0 401.0,437.0 403.0,433.0 407.0,430.0 409.0,429.0 413.0,426.0 417.0,423.0 419.0,420.0 422.0,416.0 426.0,412.0 428.0,411.0 429.0,406.0 433.0,402.0 434.0,400.0 437.0,396.0 438.0,394.0 442.0,390.0 443.0,387.0 447.0,385.0 447.0,381.0 451.0,378.0 453.0,374.0 456.0,369.0 455.0,365.0 457.0,361.0 457.0,357.0 457.0,353.0 460.0,348.0 460.0,346.0 461.0,341.0 459.0,336.0 457.0,334.0 458.0,330.0 455.0,325.0 455.0,322.0 454.0,318.0 452.0,313.0 448.0,311.0 446.0,305.0 444.0,300.0 443.0,296.0 440.0,293.0 436.0,288.0 435.0,286.0 433.0,280.0 429.0,277.0 426.0,276.0 421.0,270.0 418.0,270.0 413.0,269.0 410.0,267.0 406.0,264.0 402.0,260.0 400.0,255.0 397.0,252.0 392.0,248.0 389.0,244.0 386.0,244.0 381.0,241.0 378.0,240.0 372.0,241.0 369.0,240.0 364.0,240.0 361.0,239.3" fill="none" stroke="#0000ff" stroke-width="1.9" stroke-linejoin="round"/>
<polyline points="588.0,70.0 587.0,75.0 585.0,79.0 584.0,84.0 583.0,87.0 582.0,93.0 578.0,96.0 579.0,102.0 575.0,105.0 576.0,109.0 574.0,112.0 574.0,118.0 572.0,121.0 571.0,127.0 568.0,130.0 569.0,134.0 568.0,139.0 567.0,142.0 567.0,146.0 566.0,150.0 566.0,155.0 565.0,159.0 567.0,163.0 565.0,168.0 567.0,173.0 565.0,175.0 565.0,181.0 566.0,183.0 568.0,187.0 568.0,192.0 567.0,197.0 567.0,201.0 567.0,207.0 568.0,209.0 570.0,212.0 571.0,217.0 572.0,222.0 572.0,226.0 571.0,231.0 572.0,233.0 576.0,239.0 576.0,243.0 577.0,246.0 581.0,251.0 584.0,255.0 585.0,258.0 588.0,261.0 590.0,266.0 592.0,268.0 595.0,273.0 596.0,276.0 601.0,279.0 602.0,281.0 607.0,283.0 608.0,288.0 611.0,291.0 615.0,294.0 617.0,297.0 621.0,298.0 622.0,301.0 627.0,304.0 631.0,307.0 633.0,309.0 639.0,311.0 644.0,313.0 648.0,313.0 652.0,315.0 656.0,315.0 660.0,317.0 665.0,317.0 668.0,318.0 673.0,319.0 678.0,317.0 682.0,318.0 684.0,318.0 690.0,319.0 693.0,317.0 698.0,316.0 703.0,315.0 708.0,315.0 712.0,313.0 718.0,312.0 720.0,311.0 726.0,311.0 728.0,308.0 732.0,307.0 737.0,303.0 738.0,301.0 744.0,298.0 746.0,296.0 750.0,293.0 751.0,289.0 756.0,284.0 758.0,281.0 762.0,278.0 766.0,277.0 768.0,273.0 772.0,271.0 773.0,265.0 775.0,259.0 776.0,255.0 779.0,250.0 781.0,249.0 785.0,244.0 787.0,239.0 788.0,235.0 788.0,229.0 788.0,223.0 792.0,217.0 792.0,215.0 793.0,212.0 797.0,206.0 798.0,202.0 798.0,199.0 799.0,193.0 800.0,189.0 799.0,184.0 800.0,179.0 801.0,175.0 802.0,171.0 802.0,166.0 802.0,161.0 804.0,158.0 803.0,153.0 802.0,149.0 803.0,144.0 803.0,141.0 802.0,138.0 804.0,133.0 802.0,129.0 804.0,125.0 802.0,121.0 803.0,116.0 801.0,113.0 801.0,109.0 800.0,105.0 799.0,100.0 800.0,97.0 799.0,93.0 799.0,89.0 798.0,85.0 798.0,80.0 797.0,76.0 796.0,71.0" fill="none" stroke="#0000ff" stroke-width="1.9" stroke-linejoin="round"/>
<polygon points="258.7,348.3 256.8,353.2 252.5,355.0 248.5,353.7 244.7,350.9 245.9,346.1 247.8,341.5 252.7,340.6 255.6,344.5" fill="#58e0b8" fill-opacity="0.9" stroke="#00ff00" stroke-width="2.1"/>
<polygon points="175.7,417.0 174.6,421.0 171.4,421.8 168.6,421.4 166.1,419.1 166.9,415.3 168.3,412.0 171.6,411.0 173.5,414.1" fill="#e8e8c0" fill-opacity="0.75" stroke="#ff0000" stroke-width="2"/>
<path d="M167.7,421.5 Q166.2,411.5 171.7,413.0" fill="none" stroke="#00ff00" stroke-width="1.6"/>
<polygon points="187.3,429.0 186.7,431.6 184.3,433.1 181.6,432.5 179.0,430.7 178.9,427.3 181.3,425.0 184.3,424.9 186.8,426.3" fill="#c070c0" fill-opacity="0.35" stroke="#ff0000" stroke-width="2"/>
<polygon points="231.5,441.0 229.5,442.8 227.7,444.6 225.2,443.7 223.9,442.0 223.9,440.0 225.0,438.0 227.7,437.5 229.5,439.1" fill="#c070c0" fill-opacity="0.35" stroke="#ff0000" stroke-width="2"/>
<polygon points="241.1,480.0 240.7,484.0 237.8,486.1 234.2,486.4 232.6,482.1 231.9,477.6 234.4,474.2 237.8,474.3 240.7,475.9" fill="#e8e8c0" fill-opacity="0.75" stroke="#ff0000" stroke-width="2"/>
<path d="M233.5,485.5 Q232,473.5 238,475.0" fill="none" stroke="#00ff00" stroke-width="1.6"/>
<polygon points="311.5,403.6 308.7,407.2 305.2,410.6 300.2,409.0 297.1,405.7 297.2,401.5 299.9,397.6 305.4,395.8 310.8,398.5" fill="#e8e8c0" fill-opacity="0.75" stroke="#ff0000" stroke-width="2"/>
<path d="M297.3,409.6 Q295.8,396.6 304.8,398.1" fill="none" stroke="#00ff00" stroke-width="1.6"/>
<polygon points="671.6,97.0 671.4,99.2 669.2,100.8 666.3,100.2 665.3,98.0 664.3,95.7 666.2,93.6 669.1,93.4 671.7,94.6" fill="#c070c0" fill-opacity="0.35" stroke="#ff0000" stroke-width="2"/>
<polygon points="749.3,129.3 747.9,132.5 745.2,134.1 741.4,134.9 739.9,131.1 739.5,127.4 742.0,124.9 745.2,124.2 748.0,126.0" fill="#e8e8c0" fill-opacity="0.75" stroke="#ff0000" stroke-width="2"/>
<path d="M740.4,134.3 Q738.9,123.30000000000001 745.4,124.80000000000001" fill="none" stroke="#00ff00" stroke-width="1.6"/>
<polygon points="783.4,134.5 782.9,139.2 780.1,142.0 777.3,140.0 775.3,136.8 775.4,132.3 777.0,128.2 780.1,127.8 782.8,129.9" fill="#c070c0" fill-opacity="0.35" stroke="#ff0000" stroke-width="2"/>
<polygon points="749.9,164.3 748.9,169.7 744.4,173.1 738.9,171.6 735.1,167.3 734.8,161.2 738.8,156.8 744.3,155.6 748.1,159.6" fill="#58e0b8" fill-opacity="0.9" stroke="#00ff00" stroke-width="2.1"/>
<polygon points="765.2,179.7 764.2,181.9 762.4,183.3 760.7,182.2 759.0,180.9 759.2,178.6 760.4,176.8 762.4,176.5 764.1,177.6" fill="#58e0b8" fill-opacity="0.9" stroke="#00ff00" stroke-width="2.1"/>
<polygon points="768.3,206.4 766.2,211.8 761.0,213.4 755.7,213.5 752.8,208.9 752.0,203.6 756.3,200.4 761.3,197.7 765.1,201.9" fill="#58e0b8" fill-opacity="0.9" stroke="#00ff00" stroke-width="2.1"/>
<polygon points="629.2,176.6 627.1,180.9 624.4,185.6 620.1,183.7 618.4,178.9 617.2,173.7 620.5,170.4 624.1,169.9 627.2,172.1" fill="#c070c0" fill-opacity="0.35" stroke="#ff0000" stroke-width="2"/>
<polygon points="618.6,221.8 617.3,223.8 615.2,225.3 612.2,225.3 610.9,223.0 610.6,220.6 612.3,218.5 615.3,217.9 617.2,219.8" fill="#c070c0" fill-opacity="0.35" stroke="#ff0000" stroke-width="2"/>
<polygon points="640.6,270.6 639.7,273.2 637.4,275.2 634.5,274.2 632.2,272.2 633.0,269.3 634.7,267.3 637.5,265.5 640.4,267.4" fill="#c070c0" fill-opacity="0.35" stroke="#ff0000" stroke-width="2"/>
<polygon points="650.5,292.0 649.6,295.3 646.3,297.4 642.1,297.1 640.0,293.8 639.0,289.9 642.0,286.8 646.4,286.0 649.3,289.0" fill="#e8e8c0" fill-opacity="0.75" stroke="#ff0000" stroke-width="2"/>
<path d="M640.8,296.5 Q639.3,286.5 646.3,288.0" fill="none" stroke="#00ff00" stroke-width="1.6"/>
<polygon points="372.0,295.7 371.6,298.2 368.9,300.1 365.3,299.3 363.8,296.9 363.0,294.3 365.5,292.4 368.6,292.4 371.7,293.1" fill="#c070c0" fill-opacity="0.35" stroke="#ff0000" stroke-width="2"/>
<polygon points="376.0,334.2 374.2,337.0 371.6,338.6 368.0,339.0 366.3,335.8 365.7,332.3 368.3,329.9 371.8,328.7 375.0,330.6" fill="#c070c0" fill-opacity="0.35" stroke="#ff0000" stroke-width="2"/>
<polygon points="344.0,338.0 341.9,341.8 338.6,345.6 334.2,343.4 330.7,340.4 331.4,335.9 334.0,332.3 338.4,331.7 341.7,334.3" fill="#58e0b8" fill-opacity="0.9" stroke="#00ff00" stroke-width="2.1"/>
<rect x="23" y="71" width="786" height="458" filter="url(#dither)"/><rect x="23" y="71" width="786" height="458" filter="url(#dither2)"/>
</svg></div>
<div id="vscroll"></div>
<div id="hscroll"></div>
<!-- scrollbars -->
<svg style="left:0;top:0" width="824" height="545" viewBox="0 0 824 545">
  <defs>
   <linearGradient id="sbv" x1="0" y1="0" x2="1" y2="0"><stop offset="0" stop-color="#c8d8fa"/><stop offset="0.5" stop-color="#bccef8"/><stop offset="1" stop-color="#aabef0"/></linearGradient>
   <linearGradient id="sbh" x1="0" y1="0" x2="0" y2="1"><stop offset="0" stop-color="#cad9fb"/><stop offset="0.5" stop-color="#bccdf8"/><stop offset="1" stop-color="#acc0f0"/></linearGradient>
  </defs>
  <rect x="811.5" y="72.5" width="12" height="15" rx="2" fill="url(#sbv)" stroke="#e4ecfc"/>
  <path d="M814,82.5 L817.5,79 L821,82.5" fill="none" stroke="#4a5a88" stroke-width="2"/>
  <rect x="811.5" y="263.5" width="12" height="264" rx="2" fill="url(#sbv)" stroke="#d8e2fa"/>
  <g stroke="#f4f8ff" stroke-width="1"><path d="M814,294.5 h7 M814,296.5 h7 M814,298.5 h7 M814,300.5 h7"/></g>
  <g stroke="#90a8e0" stroke-width="1"><path d="M814,295.5 h7 M814,297.5 h7 M814,299.5 h7 M814,301.5 h7"/></g>
  <rect x="24.5" y="530.5" width="13" height="13" rx="2" fill="url(#sbh)" stroke="#e4ecfc"/>
  <path d="M32.5,533.5 L29,537 L32.5,540.5" fill="none" stroke="#4a5a88" stroke-width="2"/>
  <rect x="52.5" y="530.5" width="211" height="13" rx="2" fill="url(#sbh)" stroke="#d0dcf8"/>
  <g stroke="#f4f8ff" stroke-width="1"><path d="M154.5,534 v6 M156.5,534 v6 M158.5,534 v6 M160.5,534 v6"/></g>
  <g stroke="#90a8e0" stroke-width="1"><path d="M155.5,534 v6 M157.5,534 v6 M159.5,534 v6 M161.5,534 v6"/></g>
  <rect x="793.5" y="531.5" width="14" height="13" rx="2" fill="url(#sbh)" stroke="#e4ecfc"/>
  <path d="M798.5,534.5 L802,538 L798.5,541.5" fill="none" stroke="#4a5a88" stroke-width="2"/>
  <rect x="809" y="529" width="15" height="16" fill="#ecebdc"/>
</svg>
<!-- callout 1 -->
<div class="co" style="left:38px;top:91px;width:207px;height:104px"></div>
<div class="co" style="left:244px;top:91px;width:25px;height:104px"></div>
<div class="num" style="left:54px;top:100px;width:22px;height:22px"><span class="t" style="left:7px;top:4px;font-size:15px;color:#28285a;-webkit-text-stroke:0.5px #28285a">1</span></div>
<svg style="left:88px;top:98px" width="122" height="56" viewBox="88 98 122 56">
  <rect x="106" y="101.5" width="29" height="49" fill="#d89898"/>
  <path d="M91,150 C98,149 102,144 106,136 M135,131 C138,138 140,142 143,141 C148,140 154,119 160,119 C166,119 172,146 180,148 L206,148" fill="none" stroke="#c4c4bc" stroke-width="1.3"/>
  <path d="M106,129 C110,116 115,107 121,107 C127,107 131,115 135,127" fill="none" stroke="#a81414" stroke-width="1.7"/>
  <path d="M106.5,101.5 V150.5 M134.5,101.5 V150.5" stroke="#a81414" stroke-width="1.6"/>
  <path d="M104.5,150.5 L106.5,147 L108.5,150.5 Z M132.5,150.5 L134.5,147 L136.5,150.5 Z" fill="#a01010"/>
</svg>
<span class="t cap" style="left:72.5px;top:165.5px;font-size:15.7px;transform:scaleY(1.1);transform-origin:0 100%;-webkit-text-stroke:0.25px #000">Manual Threshold...</span>
<svg style="left:250px;top:139px" width="12" height="7" viewBox="0 0 12 7"><path d="M0.5,0.5 H11.5 L6,6.5 Z" fill="#000"/></svg>
<!-- callout 2 -->
<div class="co" style="left:103px;top:201px;width:232px;height:116px"></div>
<div class="co" style="left:334px;top:201px;width:27px;height:116px"></div>
<div class="num" style="left:121px;top:212px;width:25px;height:25px"><span class="t" style="left:8px;top:5px;font-size:16px;color:#28285a;-webkit-text-stroke:0.5px #28285a">2</span></div>
<svg style="left:155px;top:212px" width="160" height="54" viewBox="155 212 160 54">
  <defs>
   <linearGradient id="arr" x1="0" y1="0" x2="1" y2="0"><stop offset="0" stop-color="#e84848" stop-opacity="0"/><stop offset="0.5" stop-color="#e03838"/><stop offset="1" stop-color="#f02020"/></linearGradient>
   <linearGradient id="bb" x1="0" y1="0" x2="1" y2="0"><stop offset="0" stop-color="#70c8fc"/><stop offset="1" stop-color="#1c6ad0"/></linearGradient>
   <linearGradient id="bo" x1="0" y1="0" x2="1" y2="0"><stop offset="0" stop-color="#ffd040"/><stop offset="0.6" stop-color="#f8a010"/><stop offset="1" stop-color="#b85a00"/></linearGradient>
   <linearGradient id="bg" x1="0" y1="0" x2="1" y2="0"><stop offset="0" stop-color="#b8e850"/><stop offset="1" stop-color="#408810"/></linearGradient>
  </defs>
  <g fill="#f8c468" stroke="#dca048" stroke-width="1">
    <ellipse cx="176.5" cy="230" rx="12.5" ry="7" transform="rotate(-33 176.5 230)"/>
    <path d="M182,251 C178,245 181,238 188,238 C191,232 196,226 203,227 C210,228 211,236 207,241 C203,246 198,245 196,248 C193,254 186,256 182,251 Z"/>
    <ellipse cx="168.5" cy="252.5" rx="8.5" ry="7" transform="rotate(-25 168.5 252.5)"/>
    <ellipse cx="212" cy="251.5" rx="8.5" ry="7.5" transform="rotate(-15 212 251.5)"/>
  </g>
  <path d="M219,226 Q236,214 254,222" fill="none" stroke="url(#arr)" stroke-width="4"/>
  <path d="M247,229 L264.5,218.5 L264.5,232 Z" fill="#f02020"/>
  <rect x="265" y="258" width="46" height="2.5" fill="#c8c8d0"/>
  <rect x="269.5" y="227.5" width="10.5" height="29.5" rx="2.5" fill="url(#bb)" stroke="#2a70b8" stroke-width="0.6"/>
  <rect x="282" y="221.5" width="12.5" height="35.5" rx="2.5" fill="url(#bo)" stroke="#a05000" stroke-width="0.6"/>
  <rect x="297" y="233" width="11" height="24" rx="2.5" fill="url(#bg)" stroke="#3a7a10" stroke-width="0.6"/>
</svg>
<span class="t cap" style="left:141.5px;top:285px;font-size:17.7px;transform:scaleY(1.14);transform-origin:0 100%;-webkit-text-stroke:0.25px #000">Count and Measure</span>
<svg style="left:342px;top:255px" width="12" height="7" viewBox="0 0 12 7"><path d="M0.5,0.5 H11.5 L6,6.5 Z" fill="#000"/></svg>
<div id="panel"></div>
<div style="left:318px;top:344px;width:505px;height:10px;background:linear-gradient(#4a78e0,#1c44b0 25%,#0c2c94 70%,#0a2482)"></div>
<span class="t" style="left:320px;top:346px;font-size:6.5px;color:#fff;transform:scaleY(1.1)">Count and Measure Results</span>
<svg style="left:793px;top:344px" width="30" height="10" viewBox="0 0 30 10">
  <path d="M4.5,3 Q4.5,1.5 6,1.5 Q7.5,1.5 7.5,3 Q7.5,4.3 6,5 V6.5 M6,7.5 V8.5" fill="none" stroke="#fff" stroke-width="1.2"/>
  <path d="M13,2 H17 M13.8,2 V5.5 M16.2,2 V5.5 M12.5,5.5 H17.5 M15,5.5 V8.5" fill="none" stroke="#fff" stroke-width="1.2"/>
  <path d="M22,2 L27,7.5 M27,2 L22,7.5" stroke="#fff" stroke-width="1.6"/>
</svg>
<div style="left:318px;top:354px;width:505px;height:15px;background:linear-gradient(#f4f4fa,#dedeee 50%,#cacae2)"></div>
<div style="left:318px;top:369px;width:505px;height:14px;background:linear-gradient(#b8b8d8,#dcdcee 30%,#f0f0f8)"></div>
<!-- toolbar icons -->
<svg style="left:318px;top:354px" width="505" height="15" viewBox="318 354 505 15">
  <path d="M321.5,358.5 L321.5,366 L323.3,364.3 L324.6,367 L325.8,366.4 L324.6,363.8 L327,363.6 Z" fill="#f4f6fa" stroke="#6a7890" stroke-width="0.7"/>
  <circle cx="327.2" cy="359" r="1.2" fill="#50c040"/><circle cx="330" cy="359.3" r="1.3" fill="#e84040"/><circle cx="327.6" cy="361.8" r="1.2" fill="#e84040"/><circle cx="330.4" cy="362" r="1.3" fill="#3a58e0"/>
  <rect x="335" y="356" width="1" height="12" fill="#c4c4dc"/><rect x="336" y="356" width="1" height="12" fill="#fafaff"/>
  <path d="M340.5,359 L343.5,362 L346,359.5 M343.5,362 L343,366 M345,366 L348.5,361" fill="none" stroke="#c0c0cc" stroke-width="1"/>
  <rect x="353.2" y="356" width="1" height="12" fill="#c4c4dc"/><rect x="354.2" y="356" width="1" height="12" fill="#fafaff"/>
  <circle cx="362" cy="361.3" r="3.3" fill="none" stroke="#c8c8d4" stroke-width="1"/><path d="M360.3,361.3 h3.4 M364.5,364 L366,366" stroke="#c8c8d4" stroke-width="1"/>
  <circle cx="375.8" cy="361" r="3.6" fill="#e8eef8" stroke="#8898b0" stroke-width="1"/><path d="M374.3,361 h3 M375.8,359.5 v3" stroke="#203880" stroke-width="1.1"/><path d="M378.3,363.8 L380,365.8" stroke="#d8a830" stroke-width="1.8"/>
  <rect x="387.5" y="359.5" width="6" height="5" fill="#78b860"/><rect x="387.5" y="359.5" width="6" height="2" fill="#a8d0f0"/>
  <g fill="#2a48b0"><rect x="386" y="358" width="2" height="2"/><rect x="393" y="358" width="2" height="2"/><rect x="386" y="364" width="2" height="2"/><rect x="393" y="364" width="2" height="2"/></g>
  <rect x="399" y="357" width="10" height="9.5" fill="#f6f6fc"/><path d="M399.5,357 V366 H409" fill="none" stroke="#6a6ab0" stroke-width="1"/><path d="M400,365 Q402,358.5 408.5,357.5" fill="none" stroke="#70a8e0" stroke-width="0.9"/>
  <rect x="412.2" y="356" width="1" height="12" fill="#c4c4dc"/><rect x="413.2" y="356" width="1" height="12" fill="#fafaff"/>
  <path d="M419,359.5 Q421,356.5 425.5,357.2 L426.5,359.5 L420,361 Z" fill="#b8a040"/><rect x="418.5" y="362" width="1.6" height="4.5" fill="#4090e0"/><rect x="420.3" y="361" width="1.6" height="5.5" fill="#f0a020"/><rect x="422" y="362.5" width="1.3" height="4" fill="#60b030"/>
  <path d="M422,361.5 L426.5,365.5" stroke="#f01010" stroke-width="1.4"/><circle cx="422" cy="361.5" r="1" fill="#f01010"/><circle cx="426.5" cy="365.5" r="1.1" fill="#f01010"/>
  <rect x="431.5" y="356" width="1" height="12" fill="#c4c4dc"/><rect x="432.5" y="356" width="1" height="12" fill="#fafaff"/>
  <path d="M439.5,357.5 h5 l1.5,1.5 v7.5 h-6.5 Z" fill="#f4f6fa" stroke="#7080a0" stroke-width="0.7"/><rect x="437" y="360" width="7" height="6" fill="#e8eef8" stroke="#404860" stroke-width="0.7"/><path d="M438,364.5 L440,361.5 L441.5,363.5 L443,362" fill="none" stroke="#2050c0" stroke-width="0.8"/>
  <path d="M816,362 h4 M816,363.5 h4 l-2,2 z" stroke="#505060" stroke-width="0.8" fill="#505060"/>
</svg>
<!-- tab row -->
<div style="left:537px;top:370px;width:68px;height:13px;background:#fbfbf4;border:1px solid #a8a8c8;border-bottom:none"></div>
<span class="t ps" style="left:332.5px;top:375px;color:#8a8a9a">Object Measurements</span>
<span class="t ps" style="left:416.5px;top:375px;color:#8a8a9a">Object Filter</span>
<span class="t ps" style="left:472px;top:375px;color:#8a8a9a">Class Measurements</span>
<span class="t ps" style="left:551px;top:375px;color:#000">Class Histogram</span>
<span class="t ps" style="left:619px;top:375px;color:#8a8a9a">ROI Measurements</span>
<span class="t ps" style="left:694px;top:375px;color:#8a8a9a">ROI Histogram</span>
<svg style="left:318px;top:369px" width="505" height="14" viewBox="318 369 505 14">
  <rect x="322" y="372" width="9" height="9" fill="#b0c0d8"/><ellipse cx="326.5" cy="377.5" rx="4" ry="2.5" fill="#f0b020"/>
  <rect x="401" y="372" width="1" height="10" fill="#b8b8d0"/>
  <rect x="405" y="372" width="9" height="9" fill="#e8e8f0" stroke="#6070a0" stroke-width="0.6"/><path d="M406,380 L409.5,373 L413,380" fill="none" stroke="#d02020" stroke-width="1.2"/>
  <rect x="457" y="372" width="1" height="10" fill="#b8b8d0"/>
  <rect x="461" y="372" width="9" height="9" fill="#7890b8"/><rect x="463" y="375" width="2" height="5" fill="#f0d000"/><rect x="466" y="374" width="2" height="6" fill="#20a020"/>
  <rect x="541" y="373" width="2" height="7" fill="#f0a000"/><rect x="543.5" y="371.5" width="2" height="8.5" fill="#30a030"/><rect x="546" y="374" width="2" height="6" fill="#3060d0"/><rect x="540" y="380" width="9" height="1" fill="#606060"/>
  <rect x="608" y="372" width="10" height="9" fill="#f0a030"/><circle cx="613" cy="376.5" r="2.5" fill="#e03020"/>
  <rect x="681" y="372" width="1" height="10" fill="#b8b8d0"/>
  <rect x="685" y="372" width="9" height="9" fill="#f0a030"/><circle cx="689.5" cy="376.5" r="2.5" fill="#e03020"/>
  <rect x="744" y="372" width="1" height="10" fill="#b8b8d0"/>
  <path d="M807,374 L804,377 L807,380 Z" fill="none" stroke="#404050" stroke-width="0.9"/>
  <path d="M815,374 L818,377 L815,380 Z" fill="none" stroke="#404050" stroke-width="0.9"/>
</svg>
<!-- measurement row -->
<span class="t ps" style="left:322.5px;top:392.4px;font-size:6.6px">Measurement:</span>
<div style="left:396px;top:389px;width:260px;height:14px;background:#fff;border:1px solid #98b0d8"></div>
<svg style="left:398px;top:390px" width="12" height="12" viewBox="0 0 12 12"><rect x="2" y="4" width="8" height="7" fill="#c0c8d8" stroke="#707890" stroke-width="0.6"/><path d="M1,5 Q6,0 11,4" fill="#e0a030" stroke="#a07010" stroke-width="0.6"/></svg>
<span class="t ps" style="left:410.5px;top:393px;font-size:6.6px">Object Count</span>
<svg style="left:644px;top:390px" width="12" height="12" viewBox="0 0 12 12"><rect x="0.5" y="0.5" width="11" height="11" rx="1.5" fill="#c6d6f8" stroke="#b0c4ee"/><path d="M3.5,4.5 L6,7 L8.5,4.5" fill="none" stroke="#4a5a90" stroke-width="1.4"/></svg>
<span class="t ps" style="left:668.3px;top:392.4px;font-size:6.6px">Grouped by:</span>
<div style="left:734px;top:388px;width:85px;height:14px;background:#fff;border:1px solid #98b0d8"></div>
<span class="t ps" style="left:737px;top:393px;font-size:6.6px">Class</span>
<svg style="left:806px;top:389px" width="12" height="12" viewBox="0 0 12 12"><rect x="0.5" y="0.5" width="11" height="11" rx="1.5" fill="#c6d6f8" stroke="#b0c4ee"/><path d="M3.5,5 L6,7.5 L8.5,5" fill="none" stroke="#4a5a90" stroke-width="1.4"/></svg>
<!-- chart -->
<svg style="left:318px;top:405px" width="505" height="127" viewBox="318 405 505 127">
  <rect x="371.5" y="411.5" width="392" height="87" fill="#fffff2" stroke="#909090" stroke-width="1"/>
  <path d="M371.5,411 V499 H764" fill="none" stroke="#404040" stroke-width="1"/>
  <rect x="415" y="487.5" width="87" height="10.5" fill="#0000ff"/>
  <rect x="524" y="445" width="87" height="53" fill="#00ff00"/>
  <rect x="633" y="430.5" width="87" height="67.5" fill="#ff0000"/>
  <g stroke="#404040" stroke-width="1">
   <path d="M365,423.5 H371 M365,448.5 H371 M365,473.5 H371 M365,498.5 H371"/>
   <path d="M368,411.5 H371 M368,436 H371 M368,461 H371 M368,486 H371"/>
   <path d="M458.5,499 V504 M567.5,499 V504 M676.5,499 V504"/>
  </g>
  <rect x="783" y="410.5" width="6" height="9" fill="#0000ff"/>
  <rect x="783" y="421.5" width="6" height="9" fill="#00ff00"/>
  <rect x="783" y="432.7" width="6" height="9" fill="#ff0000"/>
</svg>
<span class="t ps cl" style="left:333px;top:420px;width:30px;text-align:right">150</span>
<span class="t ps cl" style="left:333px;top:445.2px;width:30px;text-align:right">100</span>
<span class="t ps cl" style="left:333px;top:469.7px;width:30px;text-align:right">50</span>
<span class="t ps cl" style="left:333px;top:494.8px;width:30px;text-align:right">0</span>
<span class="t ps cl" style="left:323px;top:474px;transform:rotate(-90deg);transform-origin:0 0">Object Count</span>
<span class="t ps cl" style="left:438.5px;top:475px;width:40px;text-align:center">21</span>
<span class="t ps cl" style="left:547.5px;top:433.8px;width:40px;text-align:center">106</span>
<span class="t ps cl" style="left:656px;top:418.4px;width:40px;text-align:center">134</span>
<span class="t ps cl" style="left:438.5px;top:505.8px;width:40px;text-align:center">DAPI</span>
<span class="t ps cl" style="left:547.5px;top:505.8px;width:40px;text-align:center">FITC</span>
<span class="t ps cl" style="left:656px;top:505.8px;width:40px;text-align:center">TRITC</span>
<span class="t ps cl" style="left:537px;top:520.5px;width:60px;text-align:center">Object Class</span>
<span class="t ps cl" style="left:795px;top:411.7px">DAPI</span>
<span class="t ps cl" style="left:795px;top:422.6px">FITC</span>
<span class="t ps cl" style="left:795px;top:434px">TRITC</span>
<!-- bottom tabs -->
<svg style="left:318px;top:532px" width="200" height="13" viewBox="318 532 200 13">
  <path d="M320.5,532 V542 Q320.5,544.5 323,544.5 L403.5,544.5 L407,532 Z" fill="#eeeef8" stroke="#8c8cc4" stroke-width="1"/>
  <path d="M407,532 L403.5,545 L503.5,545 L510,532 Z" fill="#f8f8fc"/>
  <path d="M510,532 L503.5,545" stroke="#8c8cc4" stroke-width="1"/>
  <path d="M323,535 Q326,533 328,535 L328,541 L326,540 L324,541 Z" fill="#c0c8d8" stroke="#506080" stroke-width="0.6"/>
  <rect x="409" y="533" width="9" height="10" fill="#dde4f0" stroke="#607090" stroke-width="0.6"/><circle cx="411.5" cy="536" r="1.2" fill="#e03030"/><circle cx="414" cy="539" r="1.2" fill="#30a030"/><circle cx="416" cy="536" r="1.2" fill="#3050d0"/>
</svg>
<span class="t ps" style="left:333px;top:535.6px;font-size:6.6px;color:#202070">Measurement and ROI</span>
<span class="t ps" style="left:420px;top:535.6px;font-size:6.6px;color:#202070">Count and Measure Results</span>

</body></html>
